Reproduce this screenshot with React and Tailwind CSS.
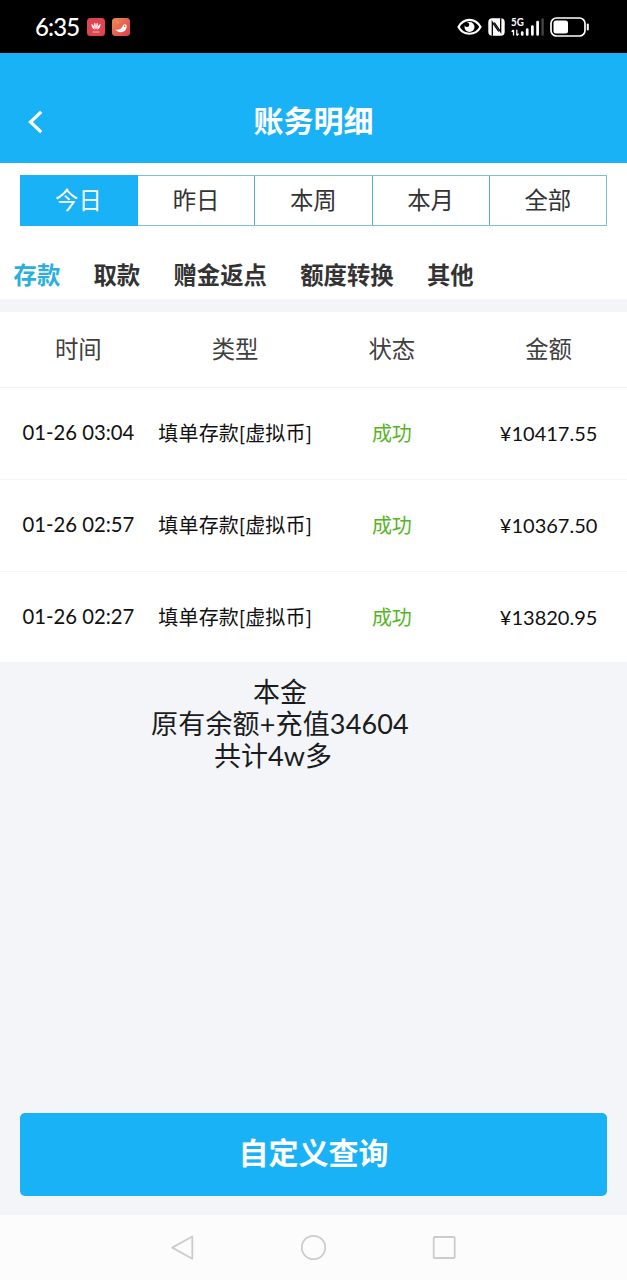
const periods = ["今日", "昨日", "本周", "本月", "全部"];
const categories = ["存款", "取款", "赠金返点", "额度转换", "其他"];
const columns = ["时间", "类型", "状态", "金额"];
const records = [
  { time: "01-26 03:04", type: "填单存款[虚拟币]", status: "成功", amount: "¥10417.55" },
  { time: "01-26 02:57", type: "填单存款[虚拟币]", status: "成功", amount: "¥10367.50" },
  { time: "01-26 02:27", type: "填单存款[虚拟币]", status: "成功", amount: "¥13820.95" },
];

function StatusBar() {
  return (
    <div className="flex h-[53px] shrink-0 items-center bg-black pl-[35px] pr-[37px] text-white">
      <span className="w-[52px] whitespace-nowrap pt-[1px] font-['Lato',sans-serif] text-[24px] font-medium leading-none tracking-[-0.9px]">
        6:35
      </span>
      <svg className="h-[18px] w-[18px]" viewBox="0 0 18 18">
        <rect width="18" height="18" rx="3.5" fill="#df4550" />
        <g fill="#fff">
          <path d="M8.600 11.500C7 9.500 6.600 6.500 7.700 4.500c1.100 1 1.300 4 .9 7zM9.400 11.500c1.600-2 2-5 .9-7-1.100 1-1.300 4-.9 7zM7.700 11.800C5.500 10.700 4.200 8.400 4.600 5.700c1.800.9 2.900 3.300 3.100 6.100zM10.300 11.800c2.200-1.100 3.500-3.400 3.100-6.100-1.800.9-2.900 3.300-3.100 6.100z" />
          <path d="M5.500 13.500h7v1h-7z" opacity=".6" />
        </g>
      </svg>
      <svg className="ml-[7px] h-[18px] w-[18px]" viewBox="0 0 18 18">
        <defs>
          <linearGradient id="peach" x1="0" y1="0" x2="1" y2="1">
            <stop offset="0" stopColor="#ee8a55" />
            <stop offset="1" stopColor="#df3f4c" />
          </linearGradient>
        </defs>
        <rect width="18" height="18" rx="3.500" fill="url(#peach)" />
        <path d="M3.500 11.500c3 .6 6-.2 7.200-3.200.5-2.600 3.500-2.900 3.900-.6C15 11.500 12 14.300 8.500 14.200 6 14 4.300 13 3.500 11.500z" fill="#fff" />
        <circle cx="12.700" cy="8.300" r=".7" fill="#c73a3e" />
        <path d="M4 3.500l3 1.500" stroke="#b9b45a" strokeWidth="1.200" />
      </svg>
      <div className="ml-auto flex items-center">
        <svg className="h-[18px] w-[25px]" viewBox="0 0 25 18">
          <path d="M1.500 9C6.500-.5 18.500-.5 23.500 9 18.500 18 6.500 18 1.500 9z" fill="none" stroke="#fff" strokeWidth="2.200" strokeLinejoin="round" />
          <circle cx="12.500" cy="9" r="5" fill="#fff" />
          <circle cx="10" cy="6.800" r="2.300" fill="#000" />
        </svg>
        <svg className="ml-[6px] h-[18px] w-[17px]" viewBox="0 0 17 18">
          <rect x=".3" y=".3" width="16.400" height="17.400" rx="4" fill="#fff" />
          <path d="M4.300 17.700V4.200L10.700 13.500M12.700.3v13.500L6.300 4.500" fill="none" stroke="#000" strokeWidth="1.300" />
        </svg>
        <svg className="-mt-[4px] ml-[6px] h-[24px] w-[34px] overflow-visible" viewBox="0 -4 34 24">
          <text x="0" y="9" fill="#fff" fontSize="11" fontWeight="700" fontFamily="Lato, sans-serif" textLength="12.800" lengthAdjust="spacingAndGlyphs">5G</text>
          <path d="M2.500 18.500v-5.500M.7 14.800L2.500 13M5.800 12.800v5.700M7.600 16.700L5.800 18.500" stroke="#fff" strokeWidth="1.300" fill="none" />
          <path d="M11.200 15.500v2M16.200 12.500v5M21.400 9.500v8M26.600 5v12.500" stroke="#fff" strokeWidth="2.700" strokeLinecap="round" />
          <path d="M31.600 1.500v17" stroke="#444" strokeWidth="2.400" />
        </svg>
        <svg className="ml-[5px] h-[20px] w-[40px]" viewBox="0 0 40 20">
          <rect x="1" y="1" width="34" height="18" rx="5.500" fill="none" stroke="#fff" strokeWidth="1.700" />
          <rect x="3.500" y="3.500" width="14.500" height="13" rx="2.500" fill="#fff" />
          <path d="M37.800 7.500v5" stroke="#fff" strokeWidth="2" strokeLinecap="round" />
        </svg>
      </div>
    </div>
  );
}

function Header() {
  return (
    <header className="grid h-[110px] shrink-0 grid-cols-[60px_1fr_60px] bg-[#19b2f6] pt-[26px] text-white">
      <button className="flex items-center pl-[27px] pt-[2px]" aria-label="返回">
        <svg className="h-[24px] w-[17px]" viewBox="0 0 17 24">
          <path d="M14.200 1.800L3.500 12l10.700 10.200" fill="none" stroke="#fff" strokeWidth="3.200" />
        </svg>
      </button>
      <h1 className="flex items-center justify-center pb-[3px] text-[30px] font-bold leading-none">账务明细</h1>
    </header>
  );
}

function Filters() {
  return (
    <section className="h-[136px] shrink-0 bg-white px-[20px] pt-[12px]">
      <div className="flex h-[51px] border border-[#7fbfd4] text-[23.4px] leading-none text-[#333]">
        {periods.map((label, i) => (
          <button
            key={label}
            className={
              i === 0
                ? "-my-px -ml-px w-[118px] shrink-0 bg-[#19b2f6] pr-[1px] text-white"
                : "flex-1 border-l border-[#5aaec4] [&:nth-child(2)]:border-l-0"
            }
          >
            {label}
          </button>
        ))}
      </div>
      <nav className="-ml-[6.500px] mt-[36px] flex gap-[33.200px] whitespace-nowrap text-[23.4px] font-bold leading-[26px] text-[#333]">
        {categories.map((label, i) => (
          <span key={label} className={i === 0 ? "text-[#2bb0dc]" : ""}>
            {label}
          </span>
        ))}
      </nav>
    </section>
  );
}

function Records() {
  return (
    <section className="mt-[13px] shrink-0 bg-white">
      <div className="grid h-[76px] grid-cols-4 items-center border-b border-[#f1f1f3] text-center text-[23.4px] leading-none text-[#404040]">
        {columns.map((label) => (
          <span key={label}>{label}</span>
        ))}
      </div>
      {records.map((r) => (
        <div
          key={r.time}
          className="grid h-[92px] grid-cols-4 items-center whitespace-nowrap border-b border-[#f5f5f7] pb-[2px] text-center text-[20px] leading-none text-[#111] last:h-[90px] last:border-b-0 last:pb-[1px]"
        >
          <span className="text-[20.300px]">{r.time}</span>
          <span className="tracking-[0.150px]">{r.type}</span>
          <span className="text-[#55b424]">{r.status}</span>
          <span>{r.amount}</span>
        </div>
      ))}
    </section>
  );
}

function SystemNav() {
  return (
    <div className="flex h-[65px] shrink-0 items-center justify-center gap-[104px] bg-[#fcfcfc]">
      <svg className="h-[27px] w-[27px]" viewBox="0 0 27 27" fill="none" stroke="#ccc" strokeWidth="1.800">
        <path d="M23.300 2.500v22.200L3.200 13.600z" strokeLinejoin="round" />
      </svg>
      <svg className="h-[27px] w-[27px]" viewBox="0 0 27 27" fill="none" stroke="#ccc" strokeWidth="1.800">
        <circle cx="13.500" cy="13.500" r="11.700" />
      </svg>
      <svg className="h-[27px] w-[27px]" viewBox="0 0 27 27" fill="none" stroke="#ccc" strokeWidth="1.800">
        <rect x="2.700" y="3" width="21" height="21" rx="1" />
      </svg>
    </div>
  );
}

export default function App() {
  return (
    <div className="flex h-[1280px] w-[627px] flex-col overflow-hidden bg-[#f4f5f8] font-['Lato','Noto_Sans_CJK_SC',sans-serif]">
      <StatusBar />
      <Header />
      <Filters />
      <Records />
      <div className="ml-[130px] mt-[14px] w-[300px] text-center text-[27px] leading-[32px] text-[#1a1c20]">
        <p>本金</p>
        <p className="whitespace-nowrap tracking-[0.150px]">原有余额+充值34604</p>
        <p className="pr-[14px]">共计4w多</p>
      </div>
      <button className="mx-[20px] mb-[19px] mt-auto h-[83px] shrink-0 rounded-[5px] bg-[#19b2f6] pb-[6px] text-[30px] font-bold leading-none text-white">
        自定义查询
      </button>
      <SystemNav />
    </div>
  );
}
